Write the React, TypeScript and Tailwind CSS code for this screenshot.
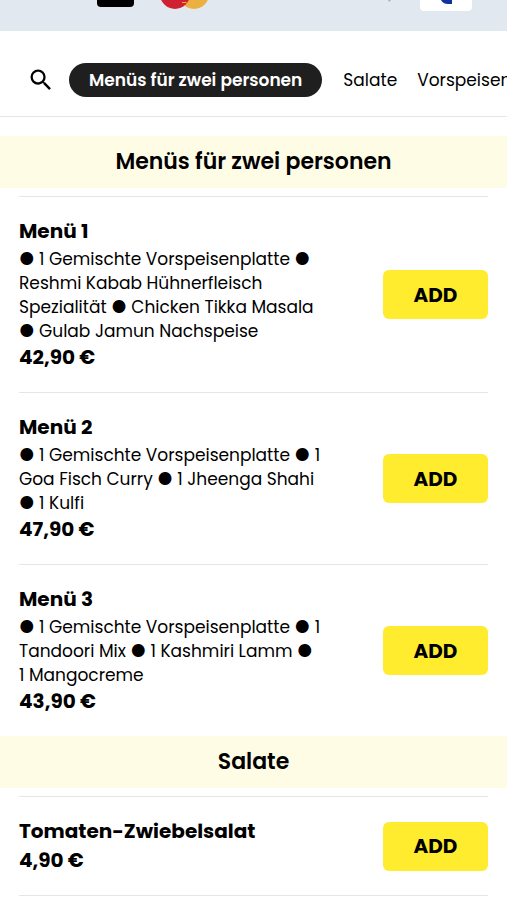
import React, { useState } from "react";
import { MdSearch } from "react-icons/md";

interface Dish {
  id: string;
  name: string;
  description?: string;
  price: string;
}

interface Category {
  id: string;
  name: string;
  dishes: Dish[];
}

const categories: Category[] = [
  {
    id: "menus",
    name: "Menüs für zwei personen",
    dishes: [
      {
        id: "menu-1",
        name: "Menü 1",
        description:
          "● 1 Gemischte Vorspeisenplatte ●\nReshmi Kabab Hühnerfleisch\nSpezialität ● Chicken Tikka Masala\n● Gulab Jamun Nachspeise",
        price: "42,90 €"
      },
      {
        id: "menu-2",
        name: "Menü 2",
        description:
          "● 1 Gemischte Vorspeisenplatte ● 1\nGoa Fisch Curry ● 1 Jheenga Shahi\n● 1 Kulfi",
        price: "47,90 €"
      },
      {
        id: "menu-3",
        name: "Menü 3",
        description:
          "● 1 Gemischte Vorspeisenplatte ● 1\nTandoori Mix ● 1 Kashmiri Lamm ●\n1 Mangocreme",
        price: "43,90 €"
      }
    ]
  },
  {
    id: "salate",
    name: "Salate",
    dishes: [{ id: "tomaten", name: "Tomaten-Zwiebelsalat", price: "4,90 €" }]
  }
];

const tabs = [
  { id: "menus", name: "Menüs für zwei personen" },
  { id: "salate", name: "Salate" },
  { id: "vorspeisen", name: "Vorspeisen" }
];

function PaymentStrip() {
  return (
    <div className="flex h-[31px] items-start bg-[#e2e8f0] pr-[35px] pl-[97px]">
      <div className="h-[7px] w-[37px] rounded-b-sm bg-black" />
      <svg className="ml-[27px] h-[10px] w-[47px]" viewBox="0 0 47 10" aria-hidden="true">
        <circle cx="33" cy="-6" r="15" fill="#ebb040" />
        <circle cx="14" cy="-6" r="15" fill="#cf2031" />
        <path d="M21 2.5h4.5" stroke="#ebb040" strokeWidth="1" />
      </svg>
      <svg className="ml-auto h-[3px] w-[5px]" viewBox="0 0 5 3" aria-hidden="true">
        <path d="M1 0h3l-2 2z" fill="#a9afbd" />
      </svg>
      <svg className="ml-7 h-[11px] w-[52px]" viewBox="0 0 52 11" aria-hidden="true">
        <rect y="-10" width="52" height="21" rx="4" fill="#fff" />
        <path d="M21 0h11v4h-4q-5 0-7-4z" fill="#1230a0" />
      </svg>
    </div>
  );
}

function DishRow({ dish, onAdd }: { dish: Dish; onAdd: () => void }) {
  return (
    <li className="flex items-center justify-between border-t border-[#e6e6e6] py-5">
      <div>
        <h3 className="text-[20px] leading-[29px] font-bold">{dish.name}</h3>
        {dish.description && (
          <p className="mt-px text-[17px] leading-6 whitespace-pre-line">{dish.description}</p>
        )}
        <p className="text-[20px] leading-[29px] font-bold">{dish.price}</p>
      </div>
      <button
        type="button"
        aria-label={`ADD ${dish.name}`}
        onClick={onAdd}
        className="h-[49px] w-[105px] shrink-0 rounded-md bg-[#ffec2e] text-[20px] font-bold"
      >
        ADD
      </button>
    </li>
  );
}

function App() {
  const [activeTab, setActiveTab] = useState("menus");
  const [cart, setCart] = useState<string[]>([]);

  return (
    <div className="w-full overflow-hidden bg-white font-['Poppins','Inter',sans-serif] text-black">
      <PaymentStrip />
      <nav className="flex h-[86px] items-center border-b border-[#e6e6e6] pt-3 pl-[27px]">
        <button type="button" aria-label="Suche" className="shrink-0">
          <MdSearch size={28} />
        </button>
        <div className="ml-[14px] flex items-center overflow-hidden">
          {tabs.map((tab) => (
            <a
              key={tab.id}
              href={`#${tab.id}`}
              onClick={() => setActiveTab(tab.id)}
              className={
                activeTab === tab.id
                  ? "mr-[11px] rounded-full bg-[#1f1f1f] px-5 text-[17px] leading-[34px] font-semibold whitespace-nowrap text-white"
                  : "px-[10px] text-[17px] leading-[34px] whitespace-nowrap"
              }
            >
              {tab.name}
            </a>
          ))}
        </div>
      </nav>
      <main className="pt-[19px]">
        {categories.map((category) => (
          <section key={category.id} id={category.id}>
            <h2 className="mb-2 bg-[#fffce6] text-center text-[22px] leading-[52px] font-semibold">
              {category.name}
            </h2>
            <ul className="mx-[19px]">
              {category.dishes.map((dish) => (
                <DishRow
                  key={dish.id}
                  dish={dish}
                  onAdd={() => setCart((prev) => [...prev, dish.id])}
                />
              ))}
            </ul>
          </section>
        ))}
        <hr className="mx-[19px] border-[#e6e6e6]" />
      </main>
      <span className="sr-only" aria-live="polite">
        {cart.length > 0 && cart.length}
      </span>
    </div>
  );
}

export default App;
